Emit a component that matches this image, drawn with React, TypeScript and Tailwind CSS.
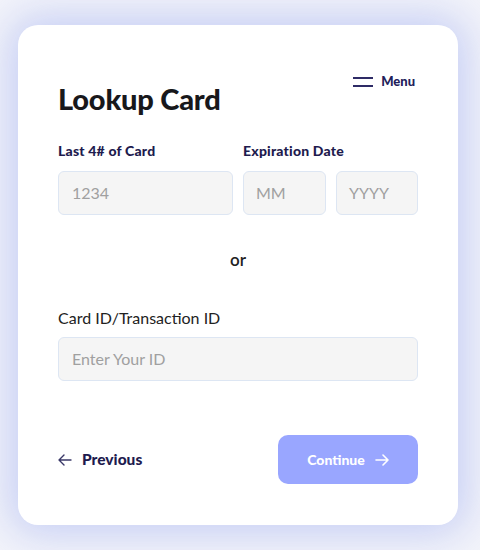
import React from "react";

const font = { fontFamily: "Lato, 'Open Sans', sans-serif" };

export default function App() {
  return (
    <div
      className="w-[480px] h-[550px] bg-[#f3f4fa] flex justify-start pl-[18px] pt-[25px] overflow-hidden"
      style={font}
    >
      <div className="w-[440px] h-[500px] bg-white rounded-[20px] shadow-[0_0_40px_10px_rgba(120,140,235,0.35)] px-[40px] pt-[48px] flex flex-col">
        <div className="flex justify-between items-start">
          <h1 className="text-[29px] font-black text-[#18181b] tracking-[-0.2px] mt-[9px] leading-[34px]">
            Lookup Card
          </h1>
          <button className="flex items-center gap-[8px] text-[#22205a] text-[13px] font-black mr-[3px] mt-[-1px]">
            <svg width="20" height="10" viewBox="0 0 20 10">
              <line x1="0" y1="1" x2="20" y2="1" stroke="#2e2b66" strokeWidth="2" />
              <line x1="0" y1="9" x2="20" y2="9" stroke="#2e2b66" strokeWidth="2" />
            </svg>
            Menu
          </button>
        </div>

        <div className="grid grid-cols-[175px_83px_82px] gap-x-[10px] mt-[25px]">
          <div className="text-[14px] font-black text-[#1e1b4e] leading-[20px] tracking-[0.2px]">Last 4# of Card</div>
          <div className="col-span-2 text-[14px] font-black text-[#1e1b4e] leading-[20px] tracking-[0.2px]">Expiration Date</div>
          <div className="mt-[10px] h-[44px] rounded-[6px] bg-[#f5f5f5] border border-[#dde6f3] flex items-center pl-[13px] text-[16px] text-[#a0a0a0]">1234</div>
          <div className="mt-[10px] h-[44px] rounded-[6px] bg-[#f5f5f5] border border-[#dde6f3] flex items-center pl-[12px] text-[16px] text-[#a0a0a0]">MM</div>
          <div className="mt-[10px] h-[44px] rounded-[6px] bg-[#f5f5f5] border border-[#dde6f3] flex items-center pl-[12px] text-[16px] text-[#a0a0a0]">YYYY</div>
        </div>

        <div className="text-center text-[17px] font-semibold text-[#222] mt-[34px] leading-[22px]">or</div>

        <div className="text-[16px] text-[#222] mt-[36px] leading-[22px]">Card ID/Transaction ID</div>
        <div className="mt-[8px] h-[44px] rounded-[6px] bg-[#f5f5f5] border border-[#dde6f3] flex items-center pl-[13px] text-[16px] text-[#a0a0a0]">
          Enter Your ID
        </div>

        <div className="flex justify-between items-center mt-[54px]">
          <button className="flex items-center gap-[10px] text-[15.5px] font-black text-[#1e1b4e]">
            <svg width="14" height="12" viewBox="0 0 14 12" fill="none" stroke="#3a3868" strokeWidth="1.4" strokeLinecap="round" strokeLinejoin="round">
              <path d="M13 6H1M6 1L1 6l5 5" />
            </svg>
            Previous
          </button>
          <button className="w-[140px] h-[49px] rounded-[10px] bg-[#99a6ff] text-white text-[14px] font-black flex items-center justify-center gap-[10px]">
            Continue
            <svg width="14" height="12" viewBox="0 0 14 12" fill="none" stroke="white" strokeWidth="1.6" strokeLinecap="round" strokeLinejoin="round">
              <path d="M1 6h12M8 1l5 5-5 5" />
            </svg>
          </button>
        </div>
      </div>
    </div>
  );
}
